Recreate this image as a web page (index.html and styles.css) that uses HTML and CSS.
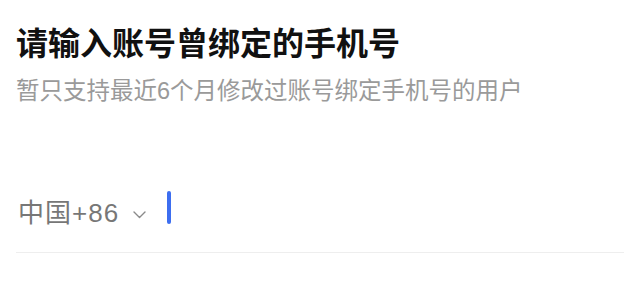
FILE: index.html
```html
<!DOCTYPE html>
<html lang="zh-CN">
<head>
    <meta charset="UTF-8">
    <meta name="viewport" content="width=device-width, initial-scale=1.0">
    <title>绑定手机号</title>
    <link rel="stylesheet" href="styles.css">
</head>
<body>
    <div class="page">
        <!-- Heading -->
        <h1 class="title">请输入账号曾绑定的手机号</h1>
        <p class="hint">暂只支持最近6个月修改过账号绑定手机号的用户</p>

        <!-- Phone input -->
        <div class="phone-row">
            <div class="area">
                <span>中国+86</span>
                <svg class="chevron" width="13" height="8" viewBox="0 0 13 8">
                    <path d="M1 1 L6.5 6.5 L12 1" fill="none" stroke="#8a8a8a" stroke-width="1.4" stroke-linecap="round" stroke-linejoin="round"/>
                </svg>
            </div>
            <span class="cursor"></span>
        </div>
    </div>
</body>
</html>
```

FILE: styles.css
```css
* {
    margin: 0;
    padding: 0;
    box-sizing: border-box;
}
body {
    background: #ffffff;
    font-family: "Liberation Sans", "Noto Sans CJK SC", sans-serif;
}
.page {
    padding: 22px 17px 0 16px;
}
/* Heading */
.title {
    font-size: 32px;
    line-height: 44px;
    font-weight: bold;
    color: #111111;
}
.hint {
    margin-top: 10px;
    font-size: 23.5px;
    line-height: 30px;
    color: #9a9a9a;
}
/* Phone input */
.phone-row {
    margin-top: 85px;
    height: 62px;
    padding-bottom: 22px;
    display: flex;
    align-items: center;
    gap: 21px;
    border-bottom: 1px solid #eeeeee;
}
.area {
    display: flex;
    align-items: center;
    gap: 14px;
    font-size: 26px;
    letter-spacing: 1px;
    color: #777777;
    padding-left: 2px;
}
.chevron {
    margin-top: 8px;
}
.cursor {
    width: 4px;
    height: 33px;
    border-radius: 2px;
    background: #3d6ef0;
    margin-top: -7px;
}
```
